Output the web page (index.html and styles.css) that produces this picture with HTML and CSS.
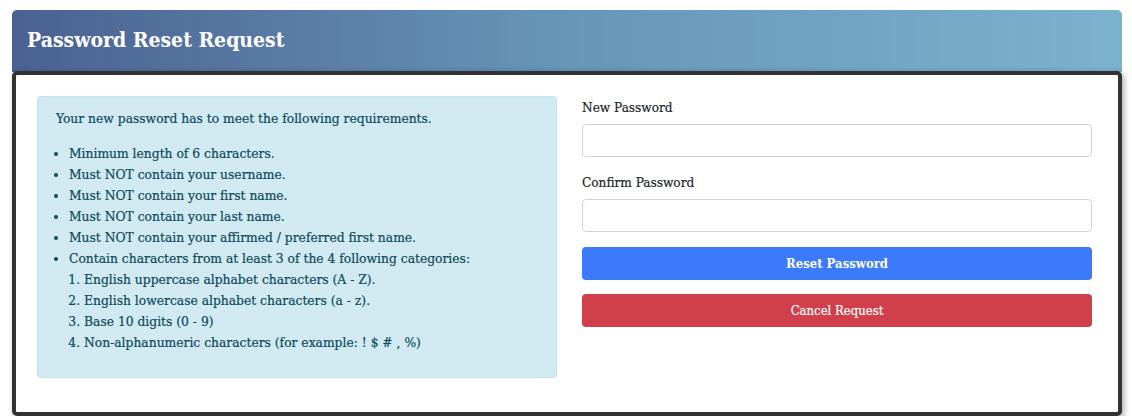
FILE: index.html
```html
<!DOCTYPE html>
<html>
<head>
<meta charset="utf-8">
<link rel="stylesheet" href="styles.css">
</head>
<body>
<div class="panel">
  <div class="panel-head"><h1>Password Reset Request</h1></div>
  <div class="panel-body">
    <div class="alert">
      <p>Your new password has to meet the following requirements.</p>
      <ul>
        <li>Minimum length of 6 characters.</li>
        <li>Must NOT contain your username.</li>
        <li>Must NOT contain your first name.</li>
        <li>Must NOT contain your last name.</li>
        <li>Must NOT contain your affirmed / preferred first name.</li>
        <li>Contain characters from at least 3 of the 4 following categories:
          <ol>
            <li>English uppercase alphabet characters (A - Z).</li>
            <li>English lowercase alphabet characters (a - z).</li>
            <li>Base 10 digits (0 - 9)</li>
            <li>Non-alphanumeric characters (for example: ! $ # , %)</li>
          </ol>
        </li>
      </ul>
    </div>
    <form class="form">
      <label class="label">New Password</label>
      <input class="input" type="password">
      <label class="label label-2">Confirm Password</label>
      <input class="input" type="password">
      <button type="button" class="btn btn-primary">Reset Password</button>
      <button type="button" class="btn btn-danger">Cancel Request</button>
    </form>
  </div>
</div>
</body>
</html>
```
FILE: styles.css
```css
* { box-sizing: border-box; }
body {
  margin: 0;
  padding: 10px 10px 0 12px;
  background: #fff;
  font-family: "DejaVu Serif Condensed", "DejaVu Serif", serif;
  font-stretch: condensed;
  color: #212529;
}
.panel {
  width: 1110px;
}
.panel-head {
  height: 62px;
  border-radius: 5px 5px 0 0;
  background: linear-gradient(to right, #4b6192 0%, #6796b8 50%, #7bb2cd 100%);
  padding: 15px 15px 0 15px;
}
.panel-head h1 {
  margin: 0;
  color: #fff;
  font-size: 21px;
  font-weight: bold;
  line-height: 30px;
}
.panel-body {
  margin-top: -1px;
  border: 4px solid #333;
  border-radius: 5px;
  background: #fff;
  box-shadow: 2px 2px 6px rgba(0,0,0,0.35);
  height: 345px;
  padding: 21px 26px 0 21px;
  display: grid;
  grid-template-columns: 520px 510px;
  column-gap: 25px;
  align-items: start;
}
.alert {
  background: #d1e9f0;
  border: 1px solid #bee5eb;
  border-radius: 4px;
  color: #0c4a5a;
  padding: 11px 17px 11px 18px;
  font-size: 13.7px;
  line-height: 21px;
  height: 282px;
  -webkit-text-stroke: 0.2px #0c4a5a;
}
.alert p { margin: 0 0 14px 0; }
.alert ul { margin: 0; padding-left: 13px; }
.alert ol { margin: 0; padding-left: 15px; }
.form {
  display: flex;
  flex-direction: column;
}
.label {
  font-size: 13.5px;
  line-height: 21px;
  margin-top: 1px;
  margin-bottom: 6px;
  color: #212529;
  -webkit-text-stroke: 0.2px #212529;
}
.label-2 { margin-top: 15px; }
.input {
  height: 33px;
  border: 1px solid #ced4da;
  border-radius: 4px;
  background: #fff;
}
.btn {
  height: 33px;
  border: none;
  border-radius: 4px;
  color: #fff;
  font-family: inherit;
  font-stretch: condensed;
  font-size: 13px;
}
.btn-primary {
  margin-top: 15px;
  background: #3b7bfb;
  font-weight: bold;
}
.btn-danger {
  margin-top: 14px;
  background: #d13f4a;
  -webkit-text-stroke: 0.2px #fff;
}
```
